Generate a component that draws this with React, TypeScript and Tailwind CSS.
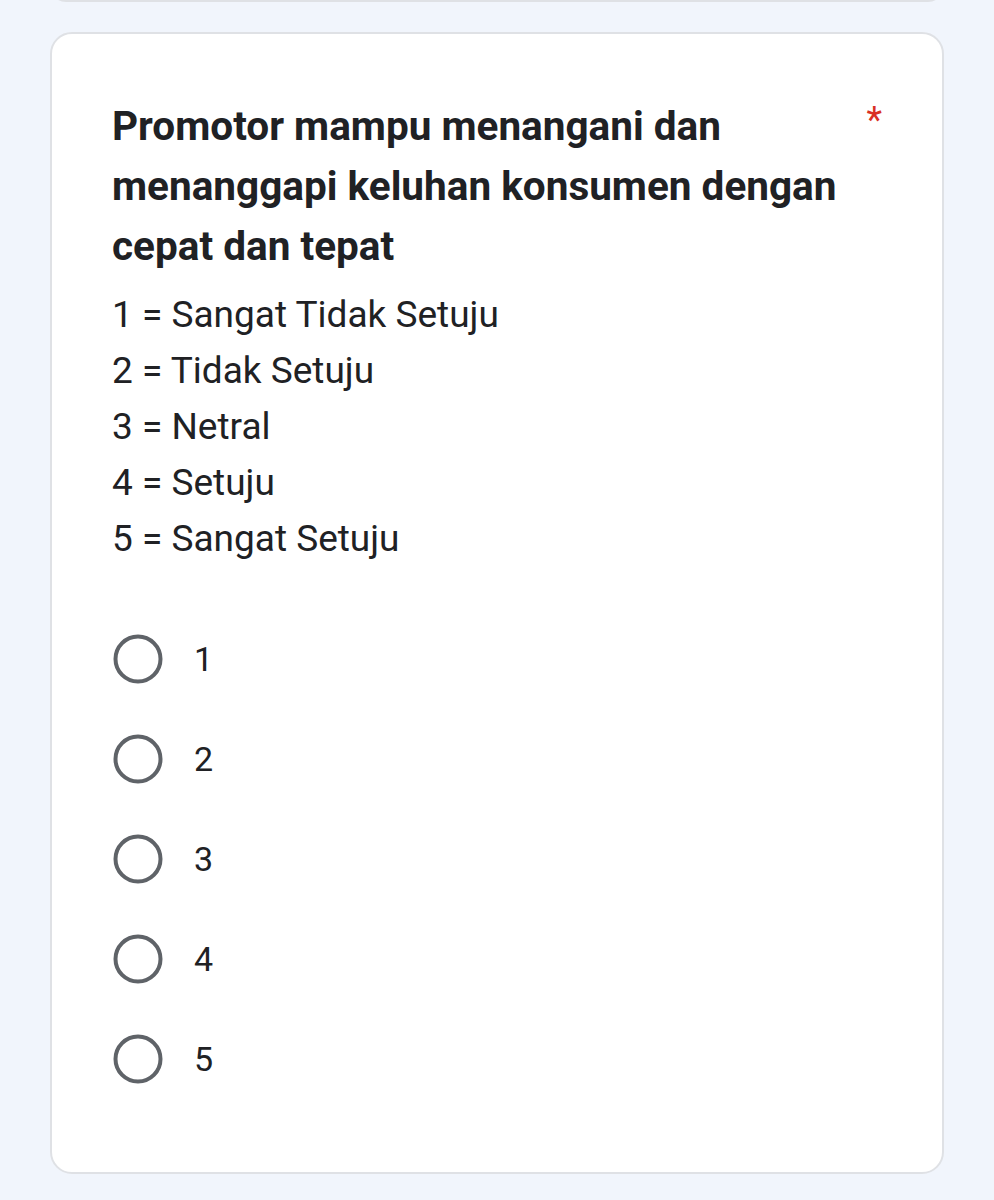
import { Fragment } from 'react'

const scale = [
  '1 = Sangat Tidak Setuju',
  '2 = Tidak Setuju',
  '3 = Netral',
  '4 = Setuju',
  '5 = Sangat Setuju',
]

const options = ['1', '2', '3', '4', '5']

function Radio() {
  return (
    <svg width="50" height="50" viewBox="0 0 50 50" className="shrink-0">
      <circle cx="25" cy="25" r="22.5" fill="none" stroke="#5f6368" strokeWidth="4" />
    </svg>
  )
}

export default function App() {
  return (
    <div
      className="min-h-[1200px] w-[994px] overflow-hidden bg-[#f1f5fc] text-[#202124]"
      style={{ fontFamily: 'Roboto, "Noto Sans", sans-serif' }}
    >
      {/* tail end of the previous question card */}
      <div className="mx-[50px] -mt-[30px] h-[32px] rounded-[22px] border-2 border-[#dfe1e5] bg-white" />

      <div className="mx-[50px] mt-[30px] rounded-[22px] border-2 border-[#dfe1e5] bg-white px-[60px] pt-[62px] pb-[63px]">
        <div className="flex items-start">
          <h2 className="w-[760px] text-[40.5px] font-bold leading-[60px]">
            Promotor mampu menangani dan menanggapi keluhan konsumen dengan cepat dan tepat
          </h2>
          <span className="ml-auto mt-[4px] text-[36px] leading-[40px] text-[#d93025]">*</span>
        </div>

        <div className="mt-[11px] text-[37px] leading-[56px]">
          {scale.map((line) => (
            <Fragment key={line}>
              <div>{line}</div>
            </Fragment>
          ))}
        </div>

        <div className="mt-[42px] flex flex-col">
          {options.map((option) => (
            <label key={option} className="flex h-[100px] items-center gap-[31px] pl-[1px]">
              <Radio />
              <span className="text-[34px] leading-[40px]">{option}</span>
            </label>
          ))}
        </div>
      </div>
    </div>
  )
}
